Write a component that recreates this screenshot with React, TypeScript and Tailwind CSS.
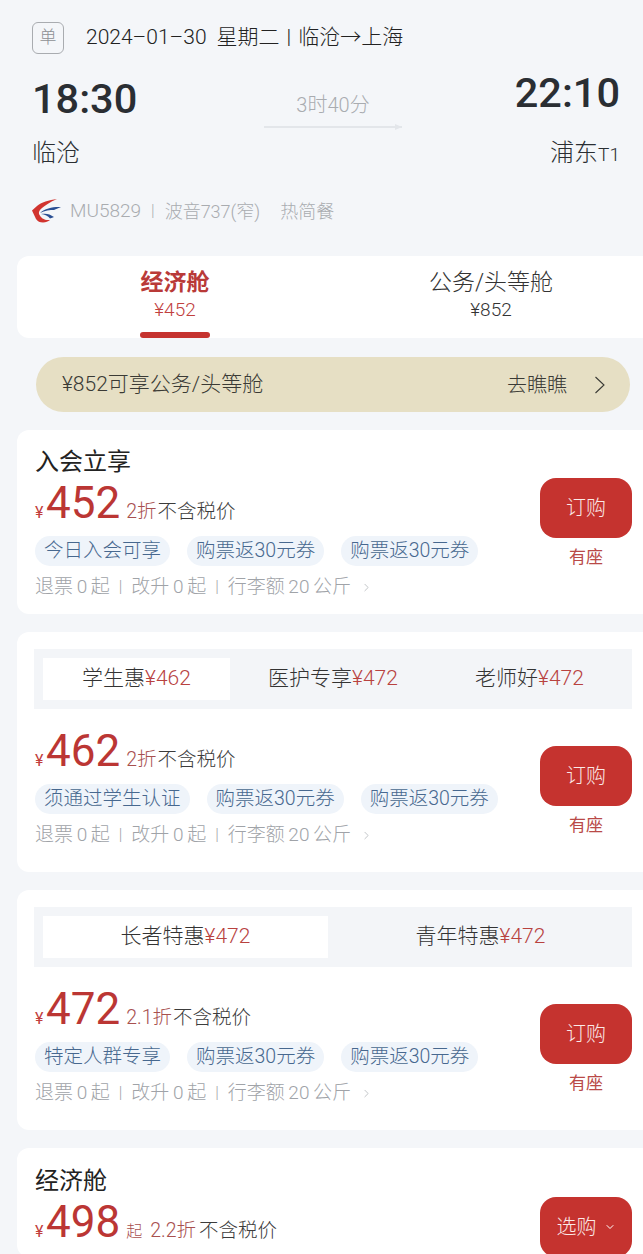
import React from 'react';
import { ChevronRight, ChevronDown } from 'lucide-react';

const fontStack = 'Roboto, "Noto Sans CJK SC", sans-serif';

type Tab = { label: string; price: string; width: string; active?: boolean };

function AirlineLogo() {
  return (
    <svg width="30" height="24" viewBox="0 0 30 24" className="shrink-0">
      <path d="M25 0 C17 1 9 3.5 5 7 L0 11.5 L4 20 C5.5 22.5 8 23.5 11 23.5 C14 23.5 16 22.5 18 21 C12 21.5 9 19 7 15 C6.5 13 7.5 11 10 9 C13 6.5 18 3 25 0 Z" fill="#d1342f" />
      <path d="M29 8 C22 7.5 13 9 8 14 C13 11.5 18 11 22 11 C24 10 27 9 29 8 Z" fill="#2a4f93" />
      <path d="M22 18 C18 15 14 14 9 15 C13 15.5 16 17 18 19.5 C19.5 19 21 18.5 22 18 Z" fill="#2a4f93" />
    </svg>
  );
}

function Price({ value, discount }: { value: string; discount: string }) {
  return (
    <div className="flex items-baseline h-[44px] leading-[44px]">
      <span className="text-[16px] text-[#c1403d] w-[11px]">¥</span>
      <span className="text-[44px] text-[#bb3634]">{value}</span>
      <span className="text-[19.5px] text-[#a8504f] font-light ml-[6px]">{discount}</span>
      <span className="text-[19.5px] text-[#3c3c3c] font-light ml-[1px]">不含税价</span>
    </div>
  );
}

function Tags({ items }: { items: string[] }) {
  return (
    <div className="flex gap-[17px] mt-[11px]">
      {items.map((t, i) => (
        <span key={i} className="h-[30px] px-[9px] rounded-[15px] bg-[#eff4fa] text-[#47688f] text-[19.5px] font-light leading-[30px] whitespace-nowrap">
          {t}
        </span>
      ))}
    </div>
  );
}

function Rules() {
  return (
    <div className="flex items-center h-[24px] mt-[9px] text-[19px] font-light text-[#a0a3a8] whitespace-nowrap [word-spacing:-1px]">
      <span>退票 0 起</span>
      <span className="mx-[9px] text-[16px]">|</span>
      <span>改升 0 起</span>
      <span className="mx-[9px] text-[16px]">|</span>
      <span>行李额 20 公斤</span>
      <ChevronRight size={13} strokeWidth={1.5} className="ml-[9px] text-[#b4b7bb]" />
    </div>
  );
}

function BuyButton({ label = '订购', seat = true, chevron = false }: { label?: string; seat?: boolean; chevron?: boolean }) {
  return (
    <div className="flex flex-col items-center w-[92px] shrink-0">
      <div className="w-[92px] h-[60px] rounded-[16px] bg-[#c5332f] flex items-center justify-center text-[#fbe9e7] text-[20px] font-light">
        {label}
        {chevron && <ChevronDown size={12} strokeWidth={2} className="ml-[7px] text-white" />}
      </div>
      {seat && <div className="mt-[9px] h-[21px] leading-[21px] text-[17px] text-[#b94a47]">有座</div>}
    </div>
  );
}

function SubTabs({ tabs }: { tabs: Tab[] }) {
  return (
    <div className="mt-[17px] ml-[17px] mr-[11px] h-[60px] bg-[#f3f5f8] flex items-center px-[9px]">
      {tabs.map((t) => (
        <div key={t.label} className={`${t.width} h-[42px] flex items-center justify-center text-[21px] font-light whitespace-nowrap ${t.active ? 'bg-white' : ''}`}>
          <span className="text-[#333]">{t.label}</span>
          <span className="text-[#b8423f]">{t.price}</span>
        </div>
      ))}
    </div>
  );
}

function FareCard({ tabs, title, value, discount, tags }: { tabs?: Tab[]; title?: string; value: string; discount: string; tags: string[] }) {
  return (
    <div className="ml-[17px] bg-white rounded-l-[12px]">
      {tabs && <SubTabs tabs={tabs} />}
      <div className={`flex items-center pl-[18px] pr-[11px] ${tabs ? 'pt-[20px] pb-[25px]' : 'pt-[18px] pb-[15px]'}`}>
        <div className="flex-1 min-w-0">
          {title && <div className="text-[24px] leading-[28px] mb-[5px] text-[#222]">{title}</div>}
          <Price value={value} discount={discount} />
          <Tags items={tags} />
          <Rules />
        </div>
        <div className={tabs ? 'mt-[6px]' : 'mb-[2px]'}>
          <BuyButton />
        </div>
      </div>
    </div>
  );
}

export default function App() {
  return (
    <div className="h-[1254px] overflow-hidden bg-[#f4f6f9]" style={{ fontFamily: fontStack }}>
      <div className="pt-[22px] px-[23px] pl-[32px]">
        <div className="flex items-center h-[32px]">
          <div className="w-[32px] h-[32px] rounded-[6px] border border-[#a9acb0] flex items-center justify-center text-[17px] font-light text-[#8d9094]">单</div>
          <div className="ml-[22px] text-[21px] font-light text-[#222] whitespace-nowrap">
            <span>2024–01–30</span>
            <span className="ml-[10px]">星期二</span>
            <span className="mx-[7px]">|</span>
            <span>临沧→上海</span>
          </div>
        </div>
        <div className="flex justify-between mt-[17px]">
          <div>
            <div className="text-[41.5px] leading-[50px] mt-[3px] font-medium text-[#2a2e33]">18:30</div>
            <div className="text-[24px] leading-[30px] mt-[14px] font-light text-[#2a2e33]">临沧</div>
          </div>
          <div className="flex flex-col items-center mt-[16px] ml-[14px]">
            <div className="text-[20px] leading-[26px] font-light text-[#a9acb0] mt-[5px]">3时40分</div>
            <div className="relative w-[138px] h-[2px] bg-[#e3e6ea] mt-[8px]">
              <div className="absolute right-0 top-[-2px] border-l-[7px] border-l-[#e3e6ea] border-y-[3px] border-y-transparent" />
            </div>
          </div>
          <div className="flex flex-col items-end">
            <div className="text-[41.5px] leading-[50px] mt-[-3px] font-medium text-[#2a2e33]">22:10</div>
            <div className="leading-[30px] mt-[20px] font-light text-[#2a2e33] whitespace-nowrap">
              <span className="text-[24px]">浦东</span>
              <span className="text-[19px]">T1</span>
            </div>
          </div>
        </div>
        <div className="flex items-center h-[24px] mt-[28px] text-[18px] font-light text-[#a9acb0] whitespace-nowrap">
          <AirlineLogo />
          <span className="ml-[8px] text-[19px]">MU5829</span>
          <span className="mx-[10px] text-[16px]">|</span>
          <span>波音737(窄)</span>
          <span className="ml-[20px]">热简餐</span>
        </div>
      </div>

      <div className="mt-[33px] ml-[17px] h-[82px] bg-white rounded-l-[12px] flex overflow-hidden">
        <div className="relative w-[316px] shrink-0 flex flex-col items-center pt-[12px]">
          <div className="text-[23px] leading-[30px] font-bold text-[#b93a38]">经济舱</div>
          <div className="text-[19px] leading-[24px] font-light text-[#c1403d]">¥452</div>
          <div className="absolute bottom-0 w-[70px] h-[6px] rounded-full bg-[#c5332f]" />
        </div>
        <div className="w-[316px] shrink-0 flex flex-col items-center pt-[12px]">
          <div className="text-[23px] leading-[30px] font-light text-[#333]">公务/头等舱</div>
          <div className="text-[19px] leading-[24px] font-light text-[#333]">¥852</div>
        </div>
      </div>

      <div className="mt-[19px] ml-[36px] mr-[13px] h-[55px] rounded-full bg-[#e6dfc4] flex items-center pl-[26px] pr-[24px] text-[20px] font-light text-[#3a3a35] whitespace-nowrap">
        <span className="flex-1 text-[21px]">¥852可享公务/头等舱</span>
        <span>去瞧瞧</span>
        <svg width="12" height="18" viewBox="0 0 12 18" className="ml-[27px] text-[#3a3a35]">
          <path d="M1.5 1 L10 9 L1.5 17" fill="none" stroke="currentColor" strokeWidth="1.1" />
        </svg>
      </div>

      <div className="mt-[18px] flex flex-col gap-[18px]">
        <FareCard
          title="入会立享"
          value="452"
          discount="2折"
          tags={['今日入会可享', '购票返30元券', '购票返30元券']}
        />
        <FareCard
          tabs={[
            { label: '学生惠', price: '¥462', width: 'w-[187px]', active: true },
            { label: '医护专享', price: '¥472', width: 'w-[206px]' },
            { label: '老师好', price: '¥472', width: 'w-[187px]' },
          ]}
          value="462"
          discount="2折"
          tags={['须通过学生认证', '购票返30元券', '购票返30元券']}
        />
        <FareCard
          tabs={[
            { label: '长者特惠', price: '¥472', width: 'w-[285px]', active: true },
            { label: '青年特惠', price: '¥472', width: 'w-[295px] pl-[10px]' },
          ]}
          value="472"
          discount="2.1折"
          tags={['特定人群专享', '购票返30元券', '购票返30元券']}
        />
        <div className="ml-[17px] bg-white rounded-l-[12px] pl-[18px] pr-[11px] pt-[19px] flex justify-between">
          <div>
            <div className="text-[24px] leading-[28px] text-[#222]">经济舱</div>
            <div className="flex items-baseline h-[44px] leading-[44px] mt-[5px]">
              <span className="text-[16px] text-[#c1403d] w-[11px]">¥</span>
              <span className="text-[44px] text-[#bb3634]">498</span>
              <span className="text-[16px] text-[#a8504f] font-light ml-[6px]">起</span>
              <span className="text-[19.5px] text-[#a8504f] font-light ml-[8px]">2.2折</span>
              <span className="text-[19.5px] text-[#3c3c3c] font-light ml-[3px]">不含税价</span>
            </div>
          </div>
          <div className="mt-[30px]">
            <BuyButton label="选购" seat={false} chevron />
          </div>
        </div>
      </div>
    </div>
  );
}
